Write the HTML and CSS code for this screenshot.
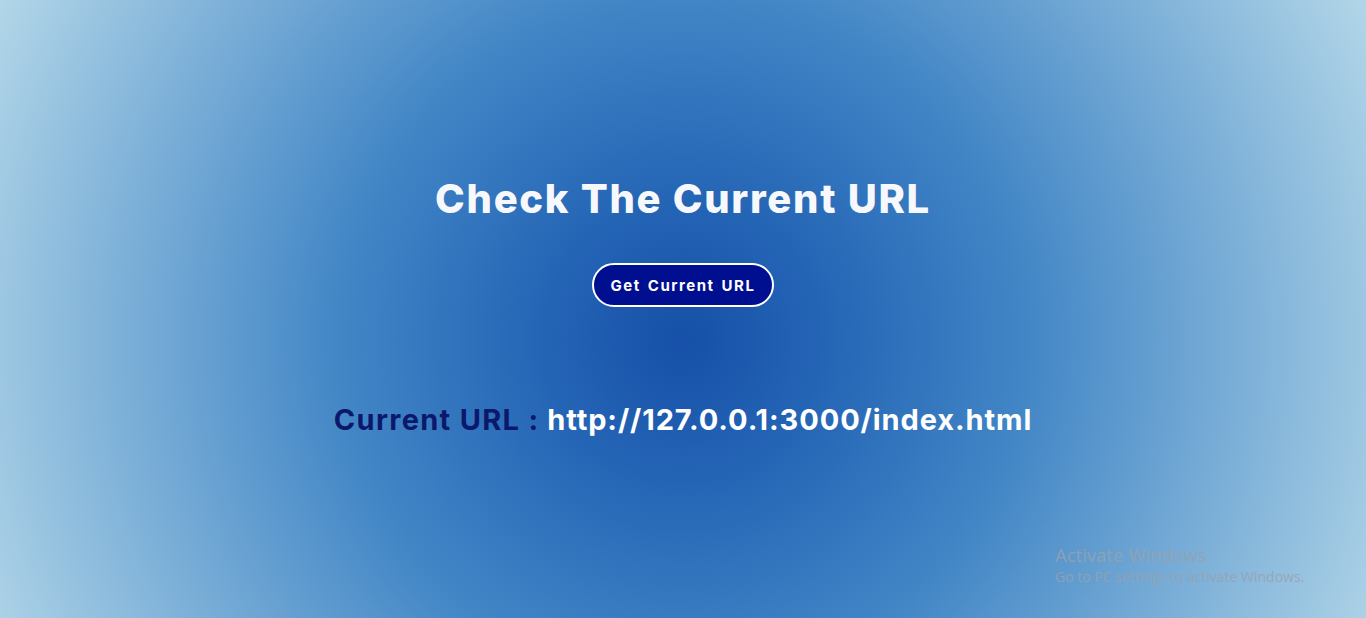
FILE: index.html
```html
<!DOCTYPE html>
<html lang="en">
<head>
<meta charset="utf-8">
<title>Check The Current URL</title>
<link rel="stylesheet" href="styles.css">
</head>
<body>
<main class="page">
  <h1 class="title">Check The Current URL</h1>
  <button class="btn" type="button">Get Current URL</button>
  <p class="result"><span class="label">Current URL :</span> <span class="url">http://127.0.0.1:3000/index.html</span></p>
</main>
<div class="watermark">
  <div class="wm-title">Activate Windows</div>
  <div class="wm-sub">Go to PC settings to activate Windows.</div>
</div>
</body>
</html>
```
FILE: styles.css
```css
html, body {
  margin: 0;
  height: 100%;
}
body {
  background: radial-gradient(circle at 50% 55%, #1650a8 0%, #2464b5 18%, #4286c6 45%, #b2d6e8 100%);
  font-family: Inter, "Open Sans", sans-serif;
  overflow: hidden;
}
.page {
  display: flex;
  flex-direction: column;
  align-items: center;
  padding-top: 172px;
}
.title {
  margin: 0;
  color: #f7f8fb;
  font-size: 40px;
  font-weight: 800;
  line-height: 54px;
  letter-spacing: 1.7px;
}
.btn {
  margin-top: 37px;
  height: 44px;
  padding: 0 17px;
  background: #000f8f;
  color: #fff;
  border: 2px solid #fff;
  border-radius: 22px;
  font-family: inherit;
  font-size: 15px;
  font-weight: 700;
  letter-spacing: 1.5px;
  word-spacing: 2px;
}
.result {
  margin: 93px 0 0;
  font-size: 29px;
  font-weight: 700;
  line-height: 40px;
  letter-spacing: 0.9px;
}
.label {
  color: #0b186b;
  letter-spacing: 1.3px;
}
.url {
  color: #fff;
}
.watermark {
  position: absolute;
  left: 1055px;
  top: 543px;
  color: rgba(150, 162, 175, 0.85);
  font-family: "Open Sans", sans-serif;
}
.wm-title {
  font-size: 18.5px;
  line-height: 24px;
}
.wm-sub {
  font-size: 14px;
  line-height: 20px;
}
```
